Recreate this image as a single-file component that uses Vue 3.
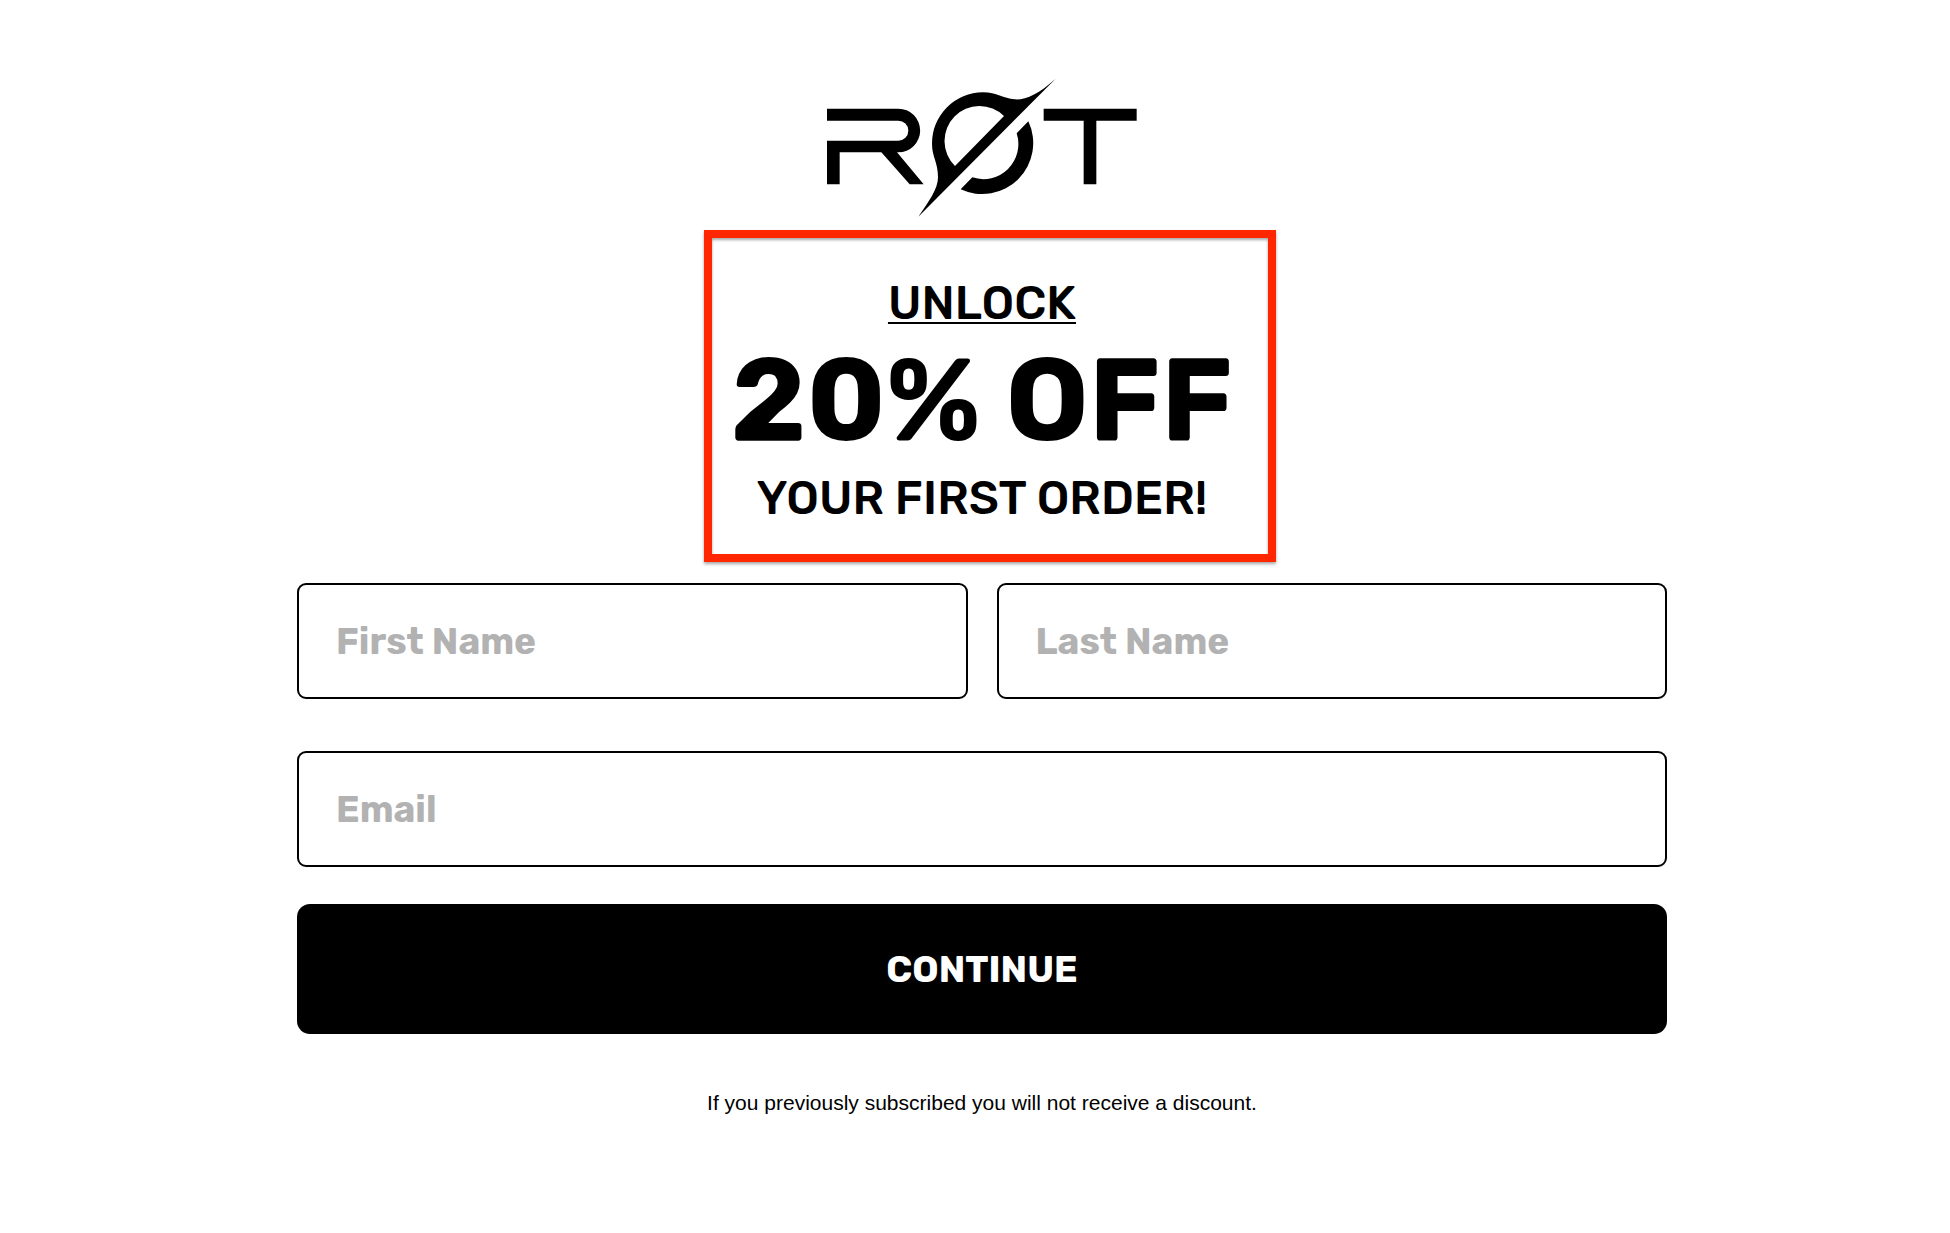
<script setup>
import { ref } from 'vue'

const firstName = ref('')
const lastName = ref('')
const email = ref('')
</script>

<template>
  <main class="page">
    <svg class="logo" viewBox="52 27 930 411" role="img" aria-label="RØT">
      <path d="M52 116H266A65.500 65.500 0 0 1 266 247H262L342 343H300L215 247H90V343H52V212H266A30 30 0 0 0 266 152H52Z" />
      <path
        fill-rule="evenodd"
        d="M738 26C686 72 650 90 615 88C580 86 562 67 520 67A153 153 0 0 0 367 221C367 262 385 275 385 322C385 358 356 396 326 440ZM583 138A105 105 0 0 0 436 288Z"
      />
      <path d="M656 154L621 190A105 105 0 0 1 488 322L453 358A153 153 0 0 0 656 154Z" />
      <path d="M702 116H981V152H860V343H822V152H702Z" />
    </svg>

    <section class="offer">
      <p class="line unlock">UNLOCK</p>
      <h1 class="discount">20% OFF</h1>
      <p class="line">YOUR FIRST ORDER!</p>
    </section>

    <form class="form" @submit.prevent>
      <div class="names">
        <input v-model="firstName" class="field" type="text" placeholder="First Name" aria-label="First Name" />
        <input v-model="lastName" class="field" type="text" placeholder="Last Name" aria-label="Last Name" />
      </div>
      <input v-model="email" class="field" type="email" placeholder="Email" aria-label="Email" />
      <button class="submit" type="submit">CONTINUE</button>
    </form>

    <p class="note">If you previously subscribed you will not receive a discount.</p>
  </main>
</template>

<style>
body {
  margin: 0;
  background: #fff;
}
</style>

<style scoped>
.page {
  display: flex;
  flex-direction: column;
  align-items: center;
  box-sizing: border-box;
  padding: 79px 283px 80px 297px;
  font-family: Rubik, Roboto, sans-serif;
  color: #000;
}

.logo {
  width: 310px;
  height: 137px;
  overflow: visible;
}

.offer {
  box-sizing: border-box;
  width: 572px;
  max-width: 100%;
  margin: 14px 0 0 16px;
  padding: 40px 16px 31px 0;
  border: 8px solid #ff2600;
  box-shadow: 0 2px 3px rgba(0, 0, 0, 0.35), inset 0 2px 3px rgba(0, 0, 0, 0.35);
  text-align: center;
}

.line {
  margin: 0;
  font-size: 47px;
  font-weight: 500;
  line-height: 50px;
}

.unlock {
  text-decoration: underline;
  text-decoration-thickness: 2px;
  text-underline-offset: 3px;
}

.discount {
  margin: 0;
  font-size: 117px;
  font-weight: 700;
  line-height: 145px;
  white-space: nowrap;
}

.form {
  display: flex;
  flex-direction: column;
  align-self: stretch;
  margin-top: 21px;
}

.names {
  display: flex;
  gap: 29px;
  margin-bottom: 52px;
}

.field {
  box-sizing: border-box;
  flex: 1 1 auto;
  width: 100%;
  min-width: 0;
  min-height: 116px;
  padding: 0 37px;
  border: 2px solid #000;
  border-radius: 9px;
  background: #fff;
  font: inherit;
  font-size: 37px;
  font-weight: 700;
  color: #000;
}

.field::placeholder {
  color: #b2b2b2;
  opacity: 1;
}

.submit {
  min-height: 130px;
  margin-top: 37px;
  padding: 0;
  border: 0;
  border-radius: 13px;
  background: #000;
  font: inherit;
  font-size: 37px;
  font-weight: 700;
  color: #fff;
}

.note {
  margin: 55px 0 0;
  font-family: "Liberation Sans", Arial, sans-serif;
  font-size: 21px;
  line-height: 28px;
}
</style>
